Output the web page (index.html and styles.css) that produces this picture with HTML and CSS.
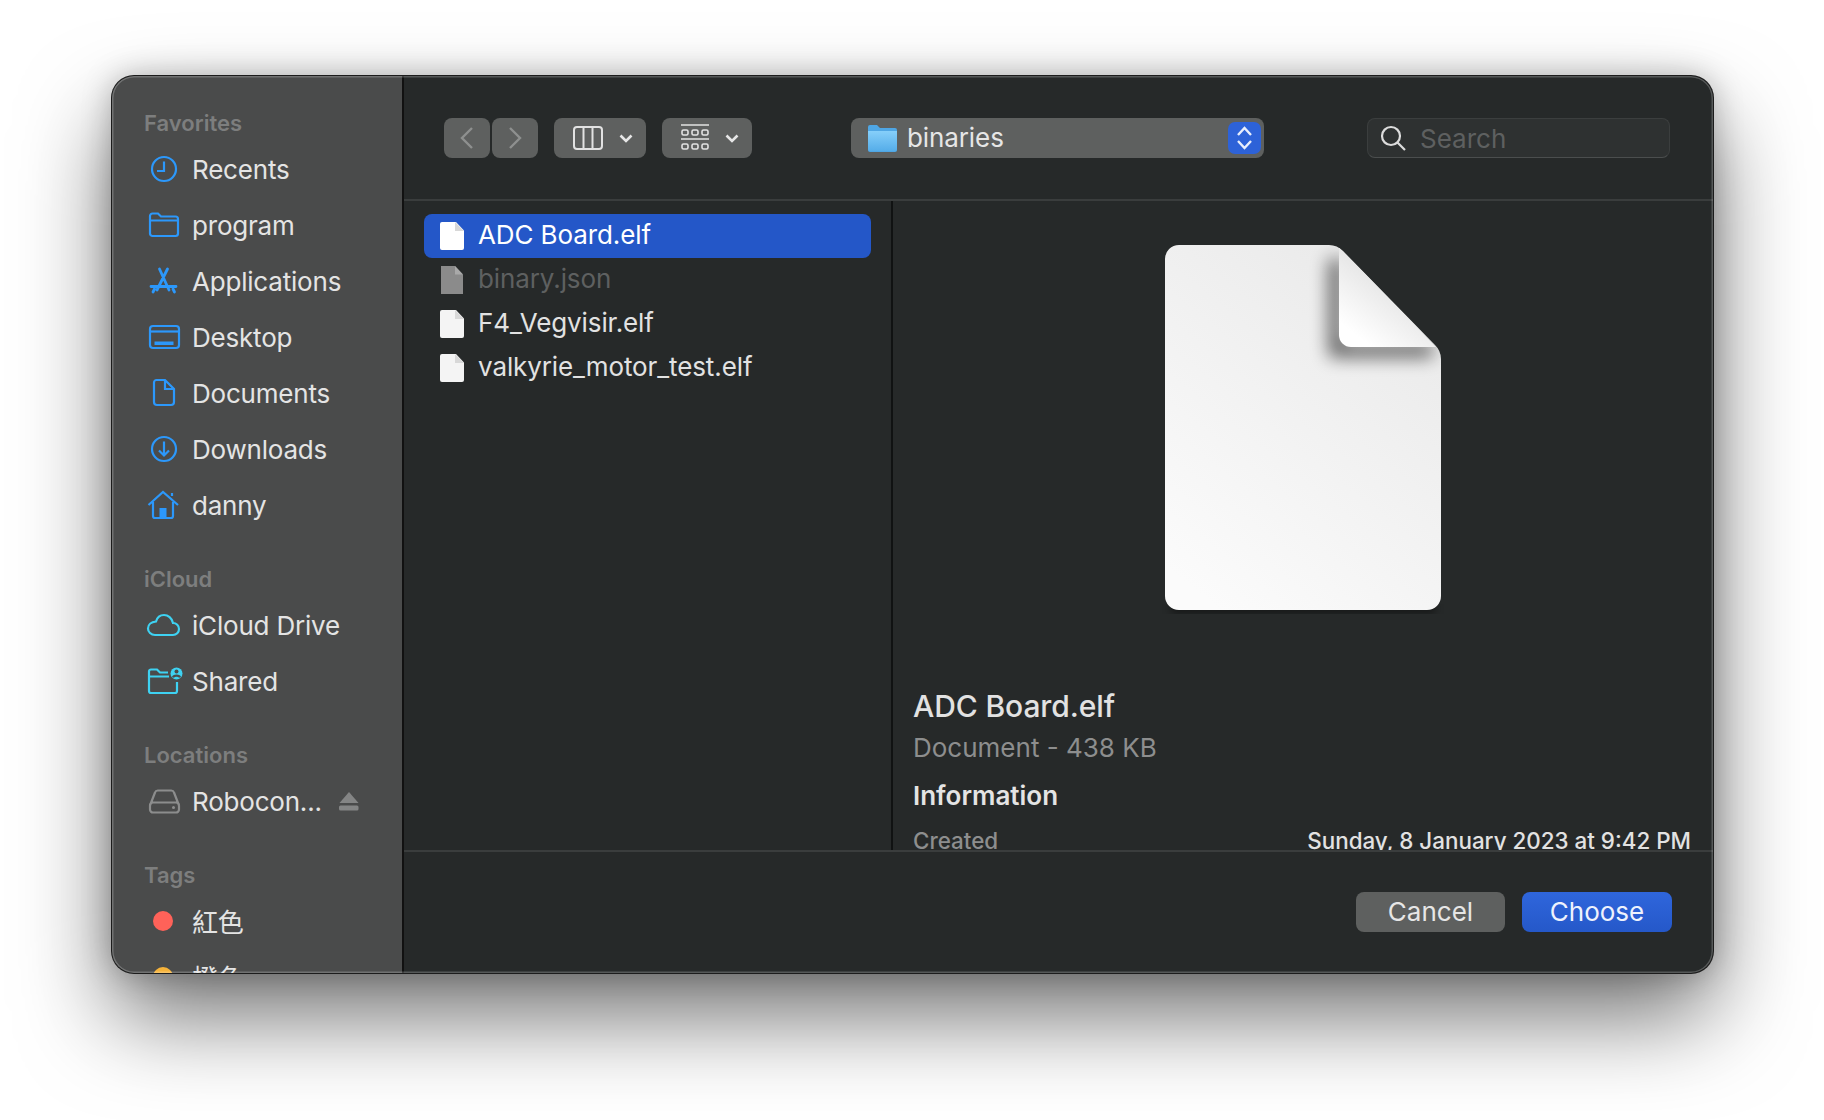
FILE: index.html
```html
<!DOCTYPE html>
<html>
  <head>
    <meta charset="UTF-8">
    <title>Choose file</title>
    <link rel="stylesheet" href="styles.css">
  </head>
  <body>
    <div class="window">
      <div class="sidebar">
        <div class="side-title">Favorites</div>
        <div class="side-row">
          <svg class="side-icon" viewBox="0 0 36 36"><circle cx="19" cy="18" r="12"/><path d="M19 10.500V20H12"/></svg>
          <span>Recents</span>
        </div>
        <div class="side-row">
          <svg class="side-icon" viewBox="0 0 36 36"><path d="M5 12V9a2.500 2.500 0 0 1 2.500-2.500H13l3 3h14.500A2.500 2.500 0 0 1 33 12v14.500a2.500 2.500 0 0 1-2.500 2.500h-23A2.500 2.500 0 0 1 5 26.500V12M5 13.500h28"/></svg>
          <span>program</span>
        </div>
        <div class="side-row">
          <svg class="side-icon apps" viewBox="0 0 36 36"><path d="M14.500 6l9.500 21M22.500 6l-10.500 21M6 23.500h25M8 29l1.500-3M29.500 29L28 26" stroke-linecap="round"/></svg>
          <span>Applications</span>
        </div>
        <div class="side-row">
          <svg class="side-icon" viewBox="0 0 36 36"><rect x="5" y="7" width="29" height="22" rx="3"/><path d="M5 12.500h29"/><rect class="solid" x="9.500" y="22.500" width="19" height="3.500"/></svg>
          <span>Desktop</span>
        </div>
        <div class="side-row">
          <svg class="side-icon" viewBox="0 0 36 36"><path d="M11.500 5H20l9 9v13a3 3 0 0 1-3 3H12a3 3 0 0 1-3-3V7.500A2.500 2.500 0 0 1 11.500 5zM20 5v9h9"/></svg>
          <span>Documents</span>
        </div>
        <div class="side-row">
          <svg class="side-icon" viewBox="0 0 36 36"><circle cx="19" cy="18" r="12"/><path d="M19 10.500v14M14 19.500l5 5 5-5"/></svg>
          <span>Downloads</span>
        </div>
        <div class="side-row">
          <svg class="side-icon" viewBox="0 0 36 36"><path d="M3.500 18L18 5l15 13M8 15v14a2 2 0 0 0 2 2h16a2 2 0 0 0 2-2V15M27 9v-3"/><rect class="solid" x="14.500" y="21" width="7" height="9"/></svg>
          <span>danny</span>
        </div>

        <div class="side-title side-gap">iCloud</div>
        <div class="side-row">
          <svg class="side-icon cyan" viewBox="0 0 36 36"><path d="M10 28h18a6 6 0 0 0 6-6 6 6 0 0 0-6-6c-1-5-5-8-9-8-4 0-7 3-8 6.500-5 .5-8 3.500-8 7 0 3.500 3 6.500 7 6.500z"/></svg>
          <span>iCloud Drive</span>
        </div>
        <div class="side-row">
          <svg class="side-icon cyan" viewBox="0 0 36 36"><path d="M4 13V8.500A2 2 0 0 1 6 6.500h6l3 3h8M4 13v15a2 2 0 0 0 2 2h24a2 2 0 0 0 2-2v-9M4 13.500h20"/><circle class="solid" cx="31.500" cy="10.500" r="6"/><circle class="cut" cx="31.500" cy="8.500" r="2"/><path class="cut-line" d="M28 14.500c.5-2.500 6.500-2.500 7 0"/></svg>
          <span>Shared</span>
        </div>

        <div class="side-title side-gap">Locations</div>
        <div class="side-row">
          <svg class="side-icon gray" viewBox="0 0 36 36"><path d="M5 22.500L10 9.500a3 3 0 0 1 3-2h13a3 3 0 0 1 3 2l5 13M5 22.500a3 3 0 0 1 3-3h23a3 3 0 0 1 3 3v4a3 3 0 0 1-3 3H8a3 3 0 0 1-3-3z"/><circle class="solid" cx="28.500" cy="24.500" r="1.500"/></svg>
          <span>Robocon...</span>
          <svg class="eject" viewBox="0 0 20 19"><path d="M10 0l9.500 11H.5z"/><rect y="13.500" width="19.500" height="5" rx="1.500"/></svg>
        </div>

        <div class="side-title side-gap">Tags</div>
        <div class="side-row">
          <span class="tag-box"><span class="tag-dot tag-red"></span></span>
          <span class="cjk">紅色</span>
        </div>
        <div class="side-row">
          <span class="tag-box"><span class="tag-dot tag-orange"></span></span>
          <span class="cjk">橙色</span>
        </div>
      </div>

      <div class="main">
        <div class="toolbar">
          <div class="nav-pair">
            <div class="btn nav-btn"><svg class="btn-icon dim" viewBox="0 0 14 24" width="14" height="24"><path d="M12 2L2 12l10 10"/></svg></div>
            <div class="btn nav-btn"><svg class="btn-icon dim" viewBox="0 0 14 24" width="14" height="24"><path d="M2 2l10 10-10 10"/></svg></div>
          </div>
          <div class="btn view-btn">
            <svg class="btn-icon" viewBox="0 0 30 24" width="30" height="24"><rect x="1" y="1" width="28" height="22" rx="3"/><path d="M10.500 1v22M19.500 1v22"/></svg>
            <svg class="chev" viewBox="0 0 14 9" width="14" height="9"><path d="M1.500 1.500L7 7l5.500-5.500"/></svg>
          </div>
          <div class="btn group-btn">
            <svg class="btn-icon thin" viewBox="0 0 28 28" width="28" height="28"><path d="M0 1h28M0 15h28"/><rect x="1" y="6" width="6" height="5" rx="1.500"/><rect x="11" y="6" width="6" height="5" rx="1.500"/><rect x="21" y="6" width="6" height="5" rx="1.500"/><rect x="1" y="20" width="6" height="5" rx="1.500"/><rect x="11" y="20" width="6" height="5" rx="1.500"/><rect x="21" y="20" width="6" height="5" rx="1.500"/></svg>
            <svg class="chev" viewBox="0 0 14 9" width="14" height="9"><path d="M1.500 1.500L7 7l5.500-5.500"/></svg>
          </div>
          <div class="btn path-btn">
            <svg class="path-folder" viewBox="0 0 29 28" width="29" height="28">
              <defs><linearGradient id="fold" x1="0" y1="0" x2="0" y2="1"><stop offset="0" stop-color="#86cffa"/><stop offset="1" stop-color="#55ade9"/></linearGradient></defs>
              <path fill="#4fa6e4" d="M0 3a2 2 0 0 1 2-2h7l3 3h15a2 2 0 0 1 2 2v20a2 2 0 0 1-2 2H2a2 2 0 0 1-2-2z"/>
              <path fill="url(#fold)" d="M0 7h29v18a2 2 0 0 1-2 2H2a2 2 0 0 1-2-2z"/>
            </svg>
            <span class="path-name">binaries</span>
            <span class="stepper">
              <svg viewBox="0 0 15 26" width="15" height="26"><path d="M1 10l6.500-7 6.500 7M1 16l6.500 7 6.500-7"/></svg>
            </span>
          </div>
          <div class="search">
            <svg class="search-icon" viewBox="0 0 28 28" width="28" height="28"><circle cx="12" cy="12" r="9"/><path d="M18.500 18.500L26 26"/></svg>
            <span>Search</span>
          </div>
        </div>

        <div class="panes">
          <div class="file-list">
            <div class="file-row selected">
              <svg class="file-icon" viewBox="0 0 24 28"><path fill="#fff" d="M2 0h14l8 8.500V26a2 2 0 0 1-2 2H2a2 2 0 0 1-2-2V2a2 2 0 0 1 2-2z"/><path fill="#d8d8d8" d="M15 0l9 9h-9z"/></svg>
              <span>ADC Board.elf</span>
            </div>
            <div class="file-row disabled">
              <svg class="file-icon" viewBox="0 0 24 28"><path fill="#8b8b8b" d="M1 0h14l8 8.500V29H1z"/><path fill="#a9a9a9" d="M15 0l8 8.500h-8z"/></svg>
              <span>binary.json</span>
            </div>
            <div class="file-row">
              <svg class="file-icon" viewBox="0 0 24 28"><path fill="#f4f4f4" d="M2 0h14l8 8.500V26a2 2 0 0 1-2 2H2a2 2 0 0 1-2-2V2a2 2 0 0 1 2-2z"/><path fill="#d8d8d8" d="M15 0l9 9h-9z"/></svg>
              <span>F4_Vegvisir.elf</span>
            </div>
            <div class="file-row">
              <svg class="file-icon" viewBox="0 0 24 28"><path fill="#f4f4f4" d="M2 0h14l8 8.500V26a2 2 0 0 1-2 2H2a2 2 0 0 1-2-2V2a2 2 0 0 1 2-2z"/><path fill="#d8d8d8" d="M15 0l9 9h-9z"/></svg>
              <span>valkyrie_motor_test.elf</span>
            </div>
          </div>

          <div class="preview">
            <svg class="doc-art" viewBox="0 0 276 365" width="276" height="365">
              <defs>
                <linearGradient id="sheet" x1="0.8" y1="0" x2="0.2" y2="1"><stop offset="0" stop-color="#e9e9e9"/><stop offset="1" stop-color="#fbfbfb"/></linearGradient>
                <linearGradient id="flap" x1="0.8" y1="0.1" x2="0.2" y2="0.9"><stop offset="0.3" stop-color="#e2e2e2"/><stop offset="1" stop-color="#ffffff"/></linearGradient>
                <filter id="soft" x="-60%" y="-60%" width="220%" height="220%"><feGaussianBlur stdDeviation="9"/></filter>
                <filter id="under" x="-10%" y="-10%" width="120%" height="120%"><feGaussianBlur stdDeviation="4"/></filter>
                <clipPath id="sheet-clip"><path d="M14 0H164a20 20 0 0 1 14 6l92 94a20 20 0 0 1 6 14V351a14 14 0 0 1-14 14H14a14 14 0 0 1-14-14V14A14 14 0 0 1 14 0z"/></clipPath>
              </defs>
              <path fill="#000" opacity="0.5" filter="url(#under)" d="M6 360h264v8H6z"/>
              <path fill="url(#sheet)" d="M14 0H164a20 20 0 0 1 14 6l92 94a20 20 0 0 1 6 14V351a14 14 0 0 1-14 14H14a14 14 0 0 1-14-14V14A14 14 0 0 1 14 0z"/>
              <g clip-path="url(#sheet-clip)">
                <path fill="#000" opacity="0.62" filter="url(#soft)" d="M178 14V98H268V112H164V14z"/>
                <path fill="url(#flap)" d="M174 2l97 100H186a12 12 0 0 1-12-12z"/>
              </g>
            </svg>
            <div class="doc-name">ADC Board.elf</div>
            <div class="doc-kind">Document - 438 KB</div>
            <div class="doc-info">Information</div>
            <div class="doc-meta">
              <span class="meta-key">Created</span>
              <span class="meta-val">Sunday, 8 January 2023 at 9:42 PM</span>
            </div>
          </div>
        </div>

        <div class="footer">
          <div class="btn foot-btn">Cancel</div>
          <div class="btn foot-btn primary">Choose</div>
        </div>
      </div>
    </div>
  </body>
</html>
```

FILE: styles.css
```css
html, body {
  margin: 0;
  height: 100%;
  background: #fff;
  overflow: hidden;
}

body {
  padding: 76px 0 0 112px;
  box-sizing: border-box;
  font-family: Inter, "Noto Sans", sans-serif;
}

.window {
  width: 1601px;
  height: 897px;
  display: flex;
  border-radius: 22px;
  overflow: hidden;
  background: #262929;
  box-shadow: 0 0 0 1px #1c1c1c, 0 44px 90px rgba(0, 0, 0, 0.55), 0 0 30px rgba(0, 0, 0, 0.25);
  position: relative;
}

.window::after {
  content: "";
  position: absolute;
  inset: 0;
  border-radius: 22px;
  box-shadow: inset 0 0 0 1.5px rgba(255, 255, 255, 0.22);
  pointer-events: none;
}

/* sidebar */

.sidebar {
  width: 292px;
  flex: none;
  box-sizing: border-box;
  padding: 27px 0 0 33px;
  background: #4a4b4b;
  border-right: 2px solid #111;
  overflow: hidden;
  color: #e4e4e4;
}

.side-title {
  height: 38px;
  margin-left: -1px;
  line-height: 40px;
  font-size: 22px;
  font-weight: 600;
  color: #7d7e7e;
}

.side-gap {
  margin-top: 26px;
}

.side-row {
  height: 56px;
  display: flex;
  align-items: center;
  font-size: 26px;
  letter-spacing: -0.2px;
  white-space: nowrap;
}

.side-icon {
  width: 36px;
  height: 36px;
  margin-right: 11px;
  flex: none;
  fill: none;
  stroke: #2c98fb;
  stroke-width: 2.2;
  overflow: visible;
}

.side-icon.apps {
  stroke-width: 2.8;
}

.side-icon .solid {
  fill: #2c98fb;
  stroke: none;
}

.side-icon.cyan {
  stroke: #3ed2f2;
}

.side-icon.cyan .solid {
  fill: #3ed2f2;
}

.side-icon.cyan .cut {
  fill: #4a4b4b;
  stroke: none;
}

.side-icon.cyan .cut-line {
  stroke: #4a4b4b;
}

.side-icon.gray {
  stroke: #8c8d8d;
}

.side-icon.gray .solid {
  fill: #8c8d8d;
}

.eject {
  width: 20px;
  height: 19px;
  margin-left: 17px;
  fill: #848585;
}

.tag-box {
  width: 36px;
  margin-right: 11px;
  display: flex;
  justify-content: center;
}

.tag-dot {
  width: 20px;
  height: 20px;
  border-radius: 50%;
}

.tag-red {
  background: #ff6259;
}

.tag-orange {
  background: #f6b33a;
}

.cjk {
  position: relative;
  top: -1px;
  font-family: "Noto Sans CJK TC", sans-serif;
}

/* main column */

.main {
  flex: 1;
  min-width: 0;
  display: flex;
  flex-direction: column;
}

.toolbar {
  height: 125px;
  flex: none;
  box-sizing: border-box;
  padding: 42px 43px 0 40px;
  display: flex;
  align-items: flex-start;
  border-bottom: 2px solid #3a3d3d;
}

.btn {
  height: 40px;
  box-sizing: border-box;
  display: flex;
  align-items: center;
  border-radius: 8px;
  background: #5e605f;
  color: #e6e6e6;
}

.btn-icon {
  fill: none;
  stroke: #e2e2e2;
  stroke-width: 2;
}

.btn-icon.dim {
  stroke: #8e908f;
  stroke-width: 2.4;
}

.btn-icon.thin {
  stroke-width: 1.600;
}

.chev {
  fill: none;
  stroke: #e6e6e6;
  stroke-width: 2.6;
}

.nav-pair {
  display: flex;
  gap: 2px;
}

.nav-btn {
  width: 46px;
  justify-content: center;
}

.view-btn {
  width: 92px;
  margin-left: 16px;
  padding-left: 19px;
  gap: 16px;
}

.group-btn {
  width: 90px;
  margin-left: 16px;
  padding-left: 19px;
  gap: 16px;
}

.path-btn {
  width: 413px;
  margin-left: 99px;
  padding: 0 3px 0 17px;
  font-size: 26px;
  letter-spacing: -0.1px;
}

.path-name {
  margin-left: 10px;
  flex: 1;
  position: relative;
  top: -1px;
}

.stepper {
  width: 33px;
  height: 32px;
  display: flex;
  align-items: center;
  justify-content: center;
  border-radius: 7px;
  background: #2d62d8;
}

.stepper svg {
  fill: none;
  stroke: #e8eefc;
  stroke-width: 2.4;
}

.search {
  width: 303px;
  height: 40px;
  margin-left: 103px;
  box-sizing: border-box;
  padding-left: 11px;
  display: flex;
  align-items: center;
  gap: 13px;
  border: 1px solid #3b3e3e;
  border-bottom-color: #4b4e4e;
  border-radius: 8px;
  background: #2e3131;
  font-size: 26px;
  color: #5e6060;
}

.search-icon {
  flex: none;
  fill: none;
  stroke: #dcdcdc;
  stroke-width: 2.200;
}

/* file list and preview */

.panes {
  flex: 1;
  min-height: 0;
  display: flex;
}

.file-list {
  width: 489px;
  flex: none;
  box-sizing: border-box;
  padding: 13px 20px 0 20px;
  border-right: 2px solid #101212;
}

.file-row {
  height: 44px;
  box-sizing: border-box;
  padding-left: 16px;
  display: flex;
  align-items: center;
  gap: 14px;
  border-radius: 8px;
  font-size: 26px;
  letter-spacing: -0.1px;
  color: #e2e2e2;
}

.file-row span {
  position: relative;
  top: -1.500px;
}

.file-row.selected {
  background: #2457c8;
  color: #fff;
}

.file-row.disabled {
  color: #5e6060;
}

.file-icon {
  width: 24px;
  height: 28px;
  flex: none;
}

.preview {
  flex: 1;
  min-width: 0;
  box-sizing: border-box;
  padding: 44px 22px 0 20px;
  overflow: hidden;
  display: flex;
  flex-direction: column;
}

.doc-art {
  align-self: center;
  flex: none;
  overflow: visible;
  position: relative;
  left: 1px;
}

.doc-name {
  margin-top: 77px;
  line-height: 38px;
  font-size: 30px;
  font-weight: 500;
  letter-spacing: -0.1px;
  color: #e2e2e2;
}

.doc-kind {
  margin-top: 5px;
  line-height: 36px;
  font-size: 26px;
  color: #8d8e8e;
}

.doc-info {
  margin-top: 12px;
  line-height: 36px;
  font-size: 26px;
  font-weight: 600;
  color: #e4e4e4;
}

.doc-meta {
  margin-top: 12px;
  flex: none;
  display: flex;
  justify-content: space-between;
  line-height: 30px;
  font-size: 22.4px;
}

.meta-key {
  color: #8d8e8e;
  font-weight: 500;
}

.meta-val {
  color: #e2e2e2;
  font-weight: 500;
}

/* footer buttons */

.footer {
  height: 123px;
  flex: none;
  box-sizing: border-box;
  padding: 40px 41px 0 0;
  display: flex;
  justify-content: flex-end;
  gap: 17px;
  border-top: 2px solid #3a3d3d;
}

.foot-btn {
  width: 149px;
  padding-bottom: 2px;
  justify-content: center;
  font-size: 26px;
}

.foot-btn.primary {
  width: 150px;
  background: linear-gradient(#2f66dc, #2558c9);
  color: #eef2fd;
}
```
